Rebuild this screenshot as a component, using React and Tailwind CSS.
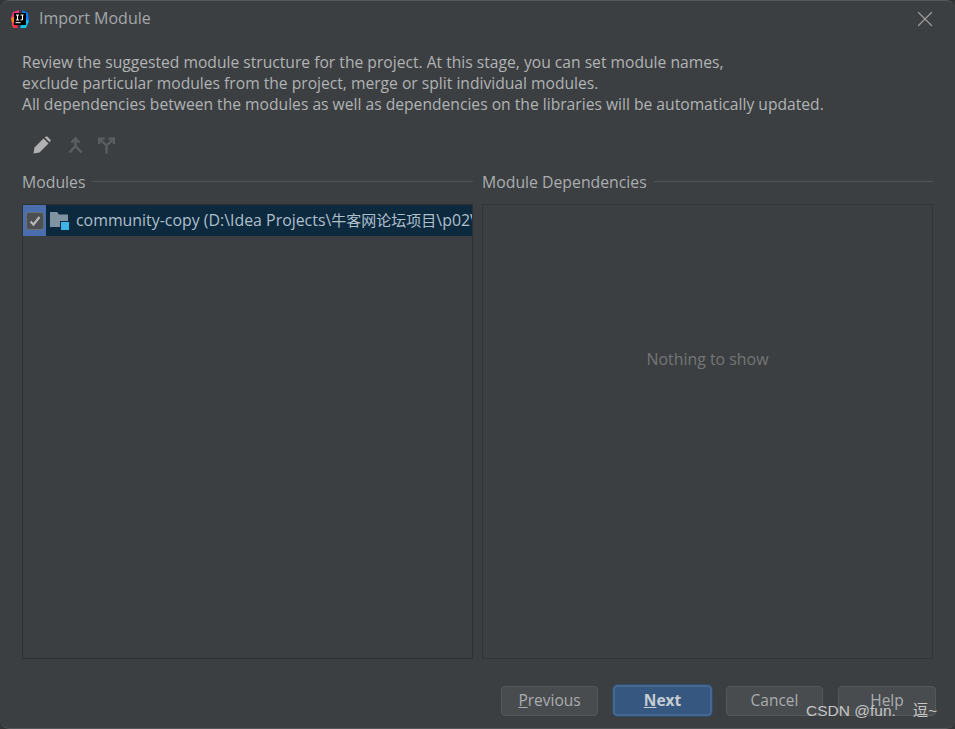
import { X } from 'lucide-react'

const font = "font-['Open_Sans','Noto_Sans_CJK_SC',sans-serif]"

function AppIcon() {
  return (
    <svg width="20" height="20" viewBox="0 0 20 20" className="shrink-0">
      <path d="M3 3 L9 1 L9 9 L1 9 Z" fill="#f5317f" />
      <path d="M1 9 L6 7 L7 15 L3 19 Z" fill="#fc801d" />
      <path d="M12 1 L18 4 L19 13 L14 10 Z" fill="#087cfa" />
      <path d="M14 9 L19 12 L16 19 L10 19 Z" fill="#07c3f2" />
      <path d="M2 14 L6 12 L8 19 L4 19 Z" fill="#fe2857" />
      <rect x="4" y="4" width="12" height="12" fill="#000" />
      <path d="M6 6 H9 M7.5 6 V11 M6 11 H9 M10.5 6 H13.5 M12.5 6 V10.5 Q12.5 11 10.5 11" stroke="#fff" strokeWidth="1.1" fill="none" />
      <rect x="5.5" y="13.2" width="5" height="1" fill="#fff" />
    </svg>
  )
}

function Pencil() {
  return (
    <svg width="18" height="18" viewBox="0 0 18 18">
      <path d="M0.5 17.5 L1.5 11.5 L10.5 2.5 L15.5 7.5 L6.5 16.5 Z" fill="#afb1b3" />
      <path d="M11.8 1.5 L13 0.5 Q13.6 0 14.2 0.5 L17.5 3.8 Q18 4.4 17.5 5 L16.5 6.2 Z" fill="#afb1b3" />
    </svg>
  )
}

function MergeIcon() {
  return (
    <svg width="15" height="17" viewBox="0 0 15 17" fill="none" stroke="#5c5f61" strokeWidth="2.4">
      <path d="M7.5 2 V9 L1.5 15.5 M7.5 9 L13.5 15.5" />
      <path d="M3.5 5.5 L7.5 1.5 L11.5 5.5" />
    </svg>
  )
}

function SplitIcon() {
  return (
    <svg width="17" height="17" viewBox="0 0 18 17" fill="none" stroke="#5c5f61" strokeWidth="2.4">
      <path d="M9 17 V8.5 L2.5 2.5 M9 8.5 L15.5 2.5" />
      <path d="M1.2 7 V1.2 H7 M11 1.2 H16.8 V7" />
    </svg>
  )
}

function ModuleFolder() {
  return (
    <svg width="19" height="18" viewBox="0 0 19 18" className="shrink-0">
      <path d="M0 0 H7 L9 2.5 H18 V15 H0 Z" fill="#7f93a1" />
      <rect x="10" y="9" width="9" height="9" fill="#0d293e" />
      <rect x="11" y="10" width="8" height="8" fill="#3eb4e6" />
    </svg>
  )
}

function SectionTitle({ children }) {
  return (
    <div className="flex items-center gap-[7px] h-[20px]">
      <span className="text-[15.8px] leading-[20px] text-[#a9adb0] whitespace-nowrap">{children}</span>
      <div className="flex-1 h-px mb-[2px] bg-[#515355]" />
    </div>
  )
}

function FooterButton({ children, primary, className = '' }) {
  if (primary) {
    return (
      <button className={`w-[99px] h-[31px] rounded-[4px] border-2 border-[#46688f] bg-[#365880] outline outline-1 outline-[#2f4c6e] text-[15.5px] leading-none font-bold text-[#c6ccd2] ${className}`}>
        {children}
      </button>
    )
  }
  return (
    <button className={`h-[30px] rounded-[4px] border border-[#55585a] bg-[#494c4e] text-[15.5px] leading-none text-[#a9adb0] ${className}`}>
      {children}
    </button>
  )
}

export default function App() {
  return (
    <div className={`relative w-[955px] h-[729px] overflow-hidden bg-[#333537] ${font}`}>
      <div className="flex flex-col w-full h-full rounded-[9px] bg-[#3c3f41] border-t border-b border-[#55585a]">
        <div className="flex items-center h-[35px] pl-[10px] pr-[17px]">
          <AppIcon />
          <span className="ml-[9px] mb-[2px] text-[16px] text-[#a3a7aa]">Import Module</span>
          <X className="ml-auto text-[#999b9d]" size={26} strokeWidth={1.2} />
        </div>

        <div className="flex flex-col flex-1 pl-[22px] pr-[22px]">
          <div className="mt-[16px] text-[15.65px] leading-[21px] text-[#b0b3b5] whitespace-nowrap">
            <p>Review the suggested module structure for the project. At this stage, you can set module names,</p>
            <p>exclude particular modules from the project, merge or split individual modules.</p>
            <p>All dependencies between the modules as well as dependencies on the libraries will be automatically updated.</p>
          </div>

          <div className="flex items-center mt-[19px] h-[22px] pl-[11px]">
            <Pencil />
            <div className="ml-[17px]"><MergeIcon /></div>
            <div className="ml-[15px]"><SplitIcon /></div>
          </div>

          <div className="grid grid-cols-[451px_451px] gap-[9px] mt-[16px]">
            <div>
              <SectionTitle>Modules</SectionTitle>
              <div className="mt-[12px] h-[455px] border border-[#2e3031] overflow-hidden">
                <div className="flex items-center h-[31px] bg-[#0d293e] overflow-hidden">
                  <div className="flex items-center justify-center w-[23px] h-full shrink-0 bg-[#4b6eaf]">
                    <div className="flex items-center justify-center w-[18px] h-[18px] rounded-[3px] border border-[#6b6e70] bg-[#4d5052]">
                      <svg width="12" height="12" viewBox="0 0 12 12" fill="none" stroke="#b8b8b8" strokeWidth="2.2">
                        <path d="M1.5 6.5 L4.5 9.5 L10.5 2" />
                      </svg>
                    </div>
                  </div>
                  <div className="ml-[4px]"><ModuleFolder /></div>
                  <span className="ml-[7px] text-[15.9px] text-[#aebfcc] whitespace-nowrap">
                    community-copy (D:\Idea Projects\<span className="text-[15px]">牛客网论坛项目</span>\p02V
                  </span>
                </div>
              </div>
            </div>
            <div>
              <SectionTitle>Module Dependencies</SectionTitle>
              <div className="flex justify-center mt-[12px] h-[455px] pt-[142px] border border-[#323435]">
                <span className="text-[15.9px] leading-[24px] text-[#737678]">Nothing to show</span>
              </div>
            </div>
          </div>

          <div className="flex items-center justify-end mt-[26px] -mr-[3px]">
            <FooterButton className="w-[97px]"><span className="underline">P</span>revious</FooterButton>
            <FooterButton primary className="ml-[15px]"><span className="underline">N</span>ext</FooterButton>
            <FooterButton className="w-[97px] ml-[14px]">Cancel</FooterButton>
            <FooterButton className="w-[98px] ml-[15px]">Help</FooterButton>
          </div>
        </div>
      </div>
      <div className="absolute left-[806px] top-[702px] flex font-['Liberation_Sans','Noto_Sans_CJK_SC',sans-serif] text-[15.5px] leading-[18px] text-[#c4c6c8] whitespace-nowrap">
        <span>CSDN @fun.</span>
        <span className="ml-[17px]">逗~</span>
      </div>
    </div>
  )
}
